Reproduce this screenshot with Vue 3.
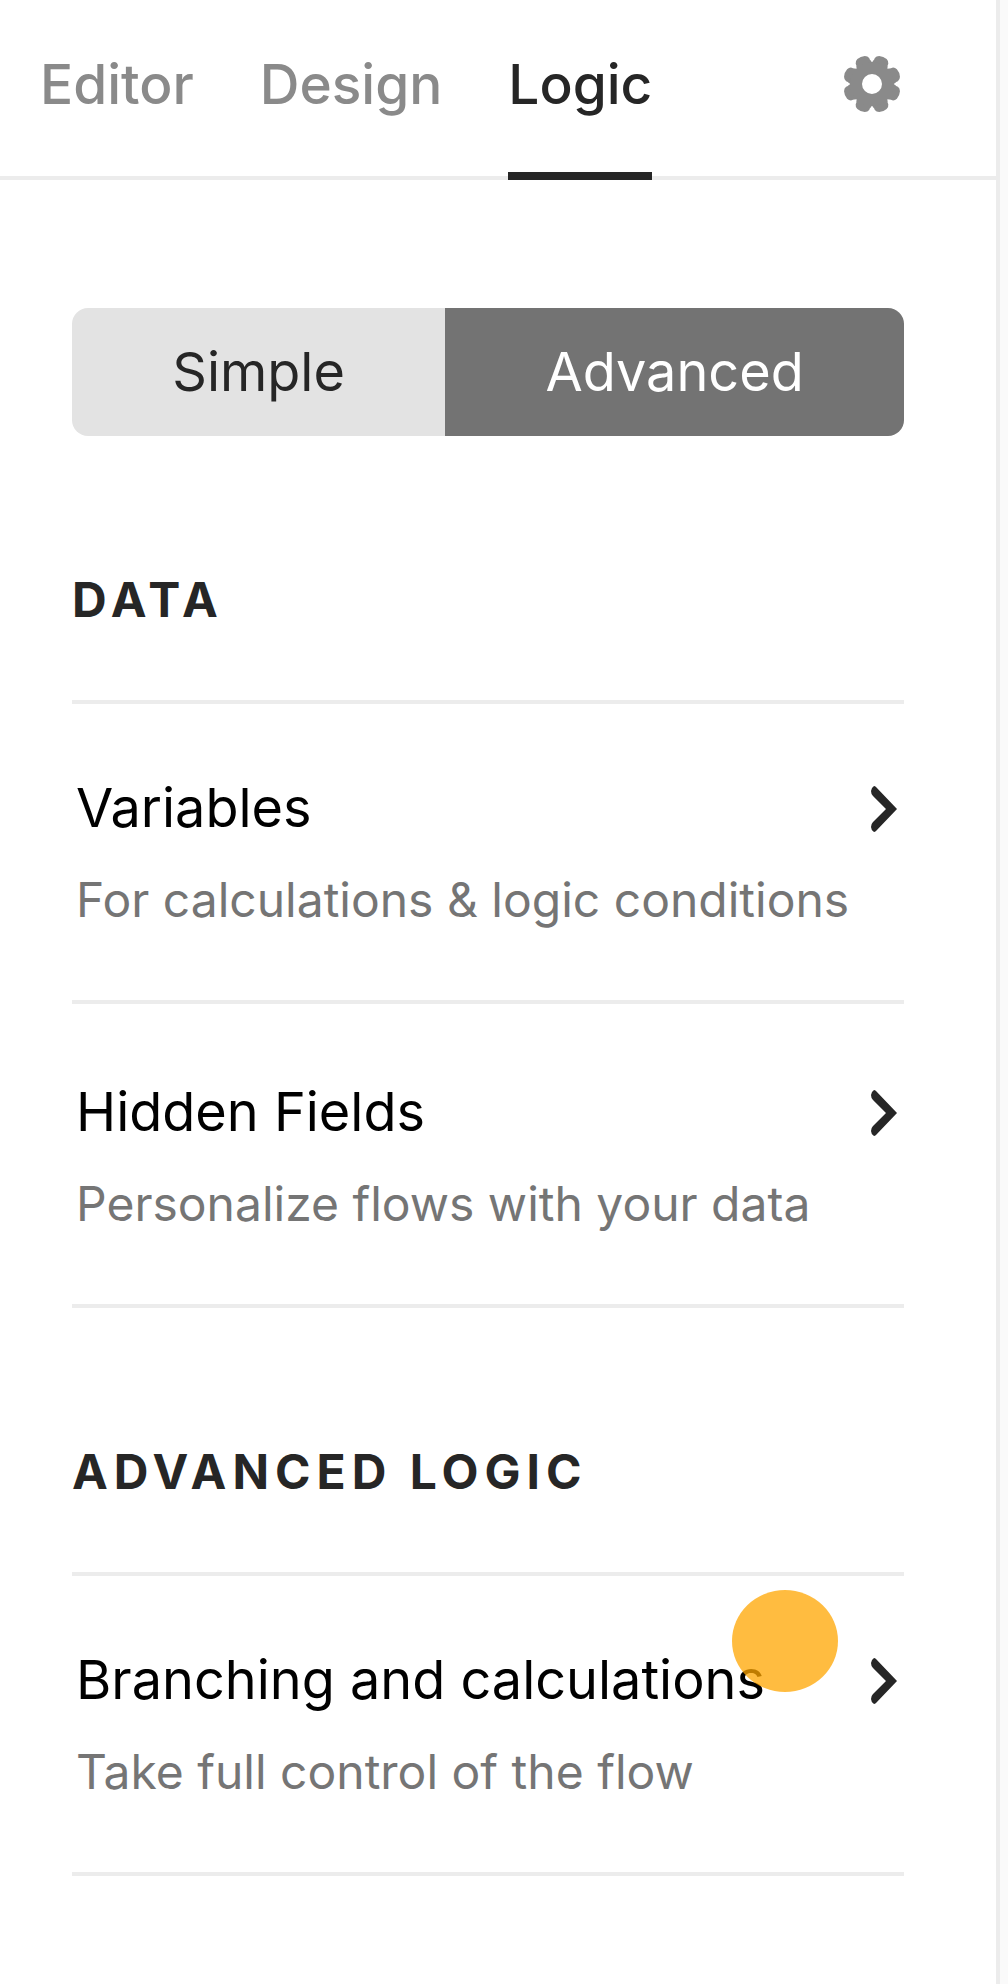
<script setup>
import { ref } from 'vue'

const tabs = ['Editor', 'Design', 'Logic']
const activeTab = ref('Logic')

const modes = ['Simple', 'Advanced']
const activeMode = ref('Advanced')

const sections = [
  {
    title: 'DATA',
    items: [
      { title: 'Variables', text: 'For calculations & logic conditions' },
      { title: 'Hidden Fields', text: 'Personalize flows with your data' },
    ],
  },
  {
    title: 'ADVANCED LOGIC',
    items: [
      { title: 'Branching and calculations', text: 'Take full control of the flow', marked: true },
    ],
  },
]

const teeth = Array.from({ length: 8 }, (_, i) => 22.5 + i * 45)
</script>

<template>
  <div class="page">
    <main class="panel">
      <header class="header">
        <nav class="tabs">
          <button
            v-for="tab in tabs"
            :key="tab"
            type="button"
            class="tab"
            :class="{ active: tab === activeTab }"
            @click="activeTab = tab"
          >{{ tab }}</button>
        </nav>
        <button type="button" class="settings" aria-label="Settings">
          <svg width="56" height="56" viewBox="-28 -28 56 56" fill="#8a8a8a" aria-hidden="true">
            <path
              v-for="angle in teeth"
              :key="angle"
              :transform="`rotate(${angle})`"
              d="M-8-18V-21.500Q-7-23-7.300-25Q-6.800-27.400-4-28.600Q0-30 4-28.600Q6.800-27.400 7.300-25Q7-23 8-21.500V-18Z"
            />
            <circle r="16" fill="none" stroke="#8a8a8a" stroke-width="12" />
          </svg>
        </button>
      </header>

      <div class="content">
        <div class="segment" role="group" aria-label="Logic mode">
          <button
            v-for="mode in modes"
            :key="mode"
            type="button"
            class="mode"
            :class="{ active: mode === activeMode }"
            :aria-pressed="mode === activeMode"
            @click="activeMode = mode"
          >{{ mode }}</button>
        </div>

        <section v-for="section in sections" :key="section.title" class="section">
          <h2 class="heading">{{ section.title }}</h2>
          <div class="list">
            <a v-for="item in section.items" :key="item.title" href="#" class="row">
              <span class="row-top">
                <span class="row-title">{{ item.title }}</span>
                <svg class="chevron" width="26" height="48" viewBox="0 -2 26 48" aria-hidden="true">
                  <path d="M3 0Q4 0 5 1L26 23L5 45Q4 46 3 46Q0 44 0 41Q0 38 2 36L15 23L2 10Q0 8 0 5Q0 2 3 0Z" fill="#262626" />
                </svg>
              </span>
              <span class="row-text">{{ item.text }}</span>
              <span v-if="item.marked" class="marker"></span>
            </a>
          </div>
        </section>
      </div>
    </main>
  </div>
</template>

<style>
body {
  margin: 0;
  background: #fafafa;
}
</style>

<style scoped>
.page {
  min-height: 100vh;
  display: flex;
  box-sizing: border-box;
  padding-right: 8px;
  background: #fafafa;
  font-family: Inter, "Liberation Sans", sans-serif;
}

.panel {
  flex: 1;
  min-width: 0;
  background: #fff;
  border-right: 4px solid #ececec;
}

button {
  margin: 0;
  padding: 0;
  border: 0;
  background: none;
  font: inherit;
  cursor: pointer;
}

.header {
  display: flex;
  justify-content: space-between;
  align-items: flex-start;
  padding: 52px 96px 0 40px;
  border-bottom: 4px solid #ececec;
}

.tabs {
  display: flex;
  gap: 66px;
  margin-bottom: -4px;
}

.tab {
  padding-bottom: 56px;
  border-bottom: 8px solid transparent;
  font-size: 55px;
  line-height: 64px;
  font-weight: 500;
  color: #8a8a8a;
}

.tab.active {
  color: #262626;
  border-bottom-color: #262626;
}

.settings {
  display: flex;
  padding: 4px 0;
}

.settings svg {
  overflow: visible;
}

.content {
  padding: 128px 92px 104px 72px;
}

.segment {
  display: flex;
  border-radius: 16px;
  overflow: hidden;
}

.mode {
  flex: 1 1 auto;
  padding: 32px 0;
  font-size: 54px;
  line-height: 64px;
  color: #262626;
  background: #e3e3e3;
}

.mode.active {
  color: #fff;
  background: #737373;
}

.section {
  padding-top: 136px;
}

.heading {
  margin: 0;
  padding-bottom: 72px;
  font-size: 48px;
  line-height: 56px;
  font-weight: 700;
  letter-spacing: 6px;
  color: #262626;
}

.list {
  border-bottom: 4px solid #ececec;
}

.row {
  position: relative;
  display: flex;
  flex-direction: column;
  gap: 32px;
  padding: 72px 7px 72px 4px;
  border-top: 4px solid #ececec;
  text-decoration: none;
}

.row + .row {
  padding-top: 76px;
}

.row-top {
  display: flex;
  justify-content: space-between;
  align-items: center;
}

.row-title {
  font-size: 54px;
  line-height: 64px;
  color: #000;
}

.row-text {
  font-size: 48px;
  line-height: 56px;
  color: #757575;
}

.chevron {
  flex: none;
}

.marker {
  position: absolute;
  top: 14px;
  right: 66px;
  width: 106px;
  height: 102px;
  border-radius: 50%;
  background: rgba(255, 166, 0, 0.75);
}
</style>
